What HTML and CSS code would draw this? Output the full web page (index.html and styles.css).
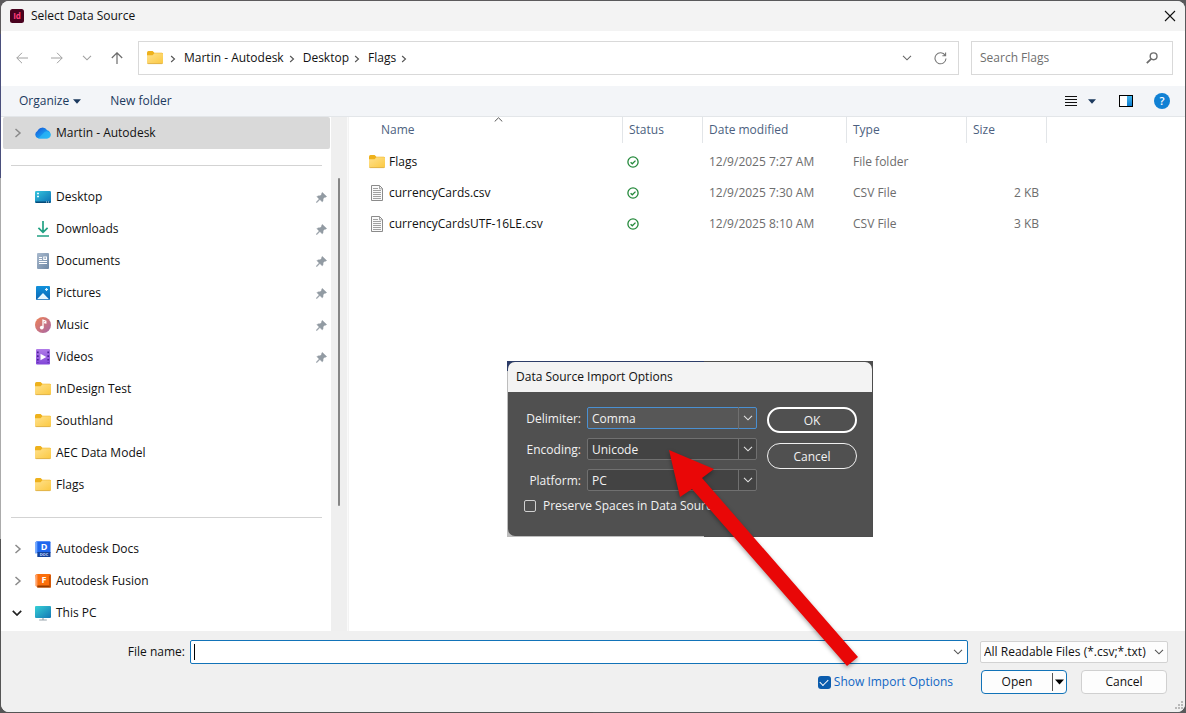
FILE: index.html
```html
<!DOCTYPE html>
<html lang="en">
<head>
<meta charset="utf-8">
<title>Select Data Source</title>
<link rel="stylesheet" href="styles.css">
</head>
<body>
<svg class="defs" width="0" height="0" aria-hidden="true">
  <defs>
    <linearGradient id="g-folder" x1="0" y1="0" x2="1" y2="1"><stop offset="0" stop-color="#ffe18e"/><stop offset="1" stop-color="#fbc942"/></linearGradient>
    <linearGradient id="g-desk" x1="0" y1="0" x2="1" y2="1"><stop offset="0" stop-color="#35c5dd"/><stop offset="1" stop-color="#0b6fb4"/></linearGradient>
    <linearGradient id="g-pc" x1="0" y1="0" x2="1" y2="1"><stop offset="0" stop-color="#36d0d6"/><stop offset="1" stop-color="#1477b5"/></linearGradient>
    <linearGradient id="g-doc" x1="0" y1="0" x2="1" y2="1"><stop offset="0" stop-color="#a9bace"/><stop offset="1" stop-color="#6e87a4"/></linearGradient>
    <linearGradient id="g-pic" x1="0" y1="0" x2="0" y2="1"><stop offset="0" stop-color="#1292dc"/><stop offset="1" stop-color="#0b66b4"/></linearGradient>
    <linearGradient id="g-music" x1="0" y1="0" x2="1" y2="1"><stop offset="0" stop-color="#ef8354"/><stop offset="1" stop-color="#a766a8"/></linearGradient>
    <linearGradient id="g-video" x1="0" y1="0" x2="0" y2="1"><stop offset="0" stop-color="#b07be8"/><stop offset="1" stop-color="#8246d8"/></linearGradient>
    <linearGradient id="g-cloud" x1="0" y1="0" x2="1" y2="1"><stop offset="0" stop-color="#1b4fd0"/><stop offset=".45" stop-color="#1787ea"/><stop offset="1" stop-color="#28c3f8"/></linearGradient>
    <linearGradient id="g-pane" x1="0" y1="0" x2="0" y2="1"><stop offset="0" stop-color="#42b5ec"/><stop offset="1" stop-color="#0b7cd0"/></linearGradient>
    <symbol id="folder" viewBox="0 0 16 16"><path d="M0 2.7Q0 1 1.5 1H5.6L7.4 2.700H14.6Q16 2.700 16 4V7H0Z" fill="#eeb11c"/><path d="M0 5.2H5.6L7.4 3.300H15Q16 3.300 16 4.300V12.500Q16 13.500 15 13.500H1Q0 13.500 0 12.500Z" fill="url(#g-folder)"/><path d="M.3 13Q.6 13.600 1.2 13.600H14.8Q15.5 13.600 15.7 13" fill="none" stroke="#d9a326" stroke-width=".8"/></symbol>
    <symbol id="pin" viewBox="0 0 11 11"><path d="M6.3.4 10.6 4.5 9.7 5.2 8.9 5 7.1 6.8 7 9.1 6.2 9.8 3.9 7.6.7 10.7.2 10.2 3.2 7 1 4.7 1.8 3.9 4.2 3.8 5.9 2.1 5.6 1.2Z" fill="#929ba3" stroke="#929ba3" stroke-width=".5"/></symbol>
    <symbol id="file" viewBox="0 0 16 16"><path d="M2.5.5H10.5L13.5 3.5V15.5H2.5Z" fill="#fafafa" stroke="#8b8b8b"/><path d="M10.5.6V3.8H13.4" fill="none" stroke="#8b8b8b" stroke-width=".8"/><path d="M4 3.5H9M4 5.5H12M4 7.5H12M4 9.5H12M4 11.5H12M4 13.5H12" stroke="#a0a0a0"/></symbol>
    <symbol id="ok" viewBox="0 0 12 12"><circle cx="6" cy="6" r="5.1" fill="none" stroke="#24893b" stroke-width="1.3"/><path d="M3.6 6.2 5.3 7.8 8.5 4.6" fill="none" stroke="#24893b" stroke-width="1.3"/></symbol>
    <symbol id="chev-r" viewBox="0 0 8 10"><path d="M1.5 1 6 5 1.5 9" fill="none" stroke="currentColor" stroke-width="1.5"/></symbol>
    <symbol id="chev-d" viewBox="0 0 10 6"><path d="M1 .8 5 4.8 9 .8" fill="none" stroke="currentColor" stroke-width="1.1"/></symbol>
    <symbol id="tri" viewBox="0 0 8 5"><path d="M0 .3H8L4 4.7Z" fill="currentColor"/></symbol>
  </defs>
</svg>

<div class="window">
  <header class="titlebar">
    <svg class="app-icon" viewBox="0 0 14 14"><rect width="14" height="14" rx="2.5" fill="#49021f"/><text x="7" y="10" class="app-letters">Id</text></svg>
    <h1 class="title">Select Data Source</h1>
    <button class="plain close" aria-label="Close"><svg width="12" height="12" viewBox="0 0 12 12"><path d="M1 1 11 11M11 1 1 11" stroke="#111" stroke-width="1.1"/></svg></button>
  </header>

  <nav class="navbar">
    <div class="arrows">
      <button class="plain muted" aria-label="Back"><svg width="12" height="12" viewBox="0 0 12 12"><path d="M12 6H.8M6 .8.8 6 6 11.2" fill="none" stroke="currentColor"/></svg></button>
      <button class="plain muted forward" aria-label="Forward"><svg width="12" height="12" viewBox="0 0 12 12"><path d="M0 6H11.2M6 .8 11.2 6 6 11.2" fill="none" stroke="currentColor"/></svg></button>
      <button class="plain muted" aria-label="Recent locations"><svg width="10" height="6"><use href="#chev-d"/></svg></button>
      <button class="plain" aria-label="Up"><svg width="12" height="12" viewBox="0 0 12 12"><path d="M6 12V.8M.8 6 6 .8 11.2 6" fill="none" stroke="currentColor" stroke-width="1.2"/></svg></button>
    </div>
    <div class="address">
      <svg class="ico" width="16" height="16"><use href="#folder"/></svg>
      <svg class="crumb-sep" width="6" height="8"><use href="#chev-r"/></svg>
      <a href="#">Martin - Autodesk</a>
      <svg class="crumb-sep" width="6" height="8"><use href="#chev-r"/></svg>
      <a href="#">Desktop</a>
      <svg class="crumb-sep" width="6" height="8"><use href="#chev-r"/></svg>
      <a href="#">Flags</a>
      <svg class="crumb-sep" width="6" height="8"><use href="#chev-r"/></svg>
      <button class="plain history" aria-label="Previous locations"><svg width="10" height="6"><use href="#chev-d"/></svg></button>
      <button class="plain refresh" aria-label="Refresh"><svg width="13" height="13" viewBox="0 0 13 13"><path d="M11.2 3.4A5.5 5.5 0 1 0 12 6.5M11.6.6V3.8H8.4" fill="none" stroke="currentColor" stroke-width="1.1"/></svg></button>
    </div>
    <label class="search">
      <input type="search" placeholder="Search Flags" aria-label="Search Flags">
      <svg width="12" height="12" viewBox="0 0 12 12"><circle cx="7.6" cy="4.3" r="3.4" fill="none" stroke="#6d6d6d" stroke-width="1.4"/><path d="M5.2 6.8.8 11.2" stroke="#6d6d6d" stroke-width="1.8"/></svg>
    </label>
  </nav>

  <div class="toolbar">
    <button class="plain organize">Organize <svg width="8" height="5"><use href="#tri"/></svg></button>
    <button class="plain">New folder</button>
    <div class="tools">
      <button class="plain view" aria-label="Change view"><svg width="12" height="11" viewBox="0 0 12 11"><path d="M0 .5H12M0 3.5H12M0 6.5H12M0 9.5H12" stroke="#111"/></svg><svg width="8" height="5"><use href="#tri"/></svg></button>
      <button class="plain" aria-label="Preview pane"><svg width="14" height="12" viewBox="0 0 14 12"><rect x=".5" y=".5" width="13" height="11" fill="#fff" stroke="#000"/><rect x="8" y="1" width="5" height="10" fill="url(#g-pane)"/></svg></button>
      <button class="plain help" aria-label="Help">?</button>
    </div>
  </div>

  <main class="browser">
    <div class="side">
      <ul class="tree">
        <li class="row selected"><svg class="twist" width="8" height="10"><use href="#chev-r"/></svg><svg class="ico" viewBox="0 0 16 16"><path d="M4 13.5A4 4 0 0 1 2.4 6 5.5 5.5 0 0 1 12.2 5.3 4.2 4.2 0 0 1 12 13.5Z" fill="url(#g-cloud)"/><path d="M3.2 13.4 9.8 6.8A4.5 4.5 0 0 1 16 9.4 4 4 0 0 1 12 13.5H4Z" fill="#29b7f6" opacity=".75"/></svg><span>Martin - Autodesk</span></li>
        <li class="row divider"></li>
        <li class="row"><svg class="ico" viewBox="0 0 16 16"><rect y="2" width="16" height="12" rx="1.2" fill="url(#g-desk)"/><path d="M.3 12.6H15.7V13Q15.5 14 14.5 14H1.5Q.5 14 .3 13Z" fill="#064a78"/><path d="M2 4.5H4M2 7.5H4" stroke="#e6fbff" stroke-width="1.5"/><path d="M11 13H12M13 13H14" stroke="#fff" stroke-width=".8"/></svg><span>Desktop</span><svg class="pin"><use href="#pin"/></svg></li>
        <li class="row"><svg class="ico" viewBox="0 0 16 16"><path d="M8 0V11M3.4 6.8 8 11.4 12.6 6.8" fill="none" stroke="#22a183" stroke-width="1.7"/><path d="M2 15H14" stroke="#22a183" stroke-width="1.6"/></svg><span>Downloads</span><svg class="pin"><use href="#pin"/></svg></li>
        <li class="row"><svg class="ico" viewBox="0 0 16 16"><rect x="2" width="12" height="16" rx="1" fill="url(#g-doc)"/><path d="M4 4.5H7M4 6.5H7M4 8.5H12M4 10.5H12" stroke="#fff"/><path d="M8.2 3.5H12V7H8.2Z" fill="#fff"/><path d="M9.3 4.5H11V5.8H9.3Z" fill="#7f95af"/></svg><span>Documents</span><svg class="pin"><use href="#pin"/></svg></li>
        <li class="row"><svg class="ico" viewBox="0 0 16 16"><rect x="1" y="1" width="14" height="14" rx="1" fill="url(#g-pic)"/><path d="M2 14.2 8 8 14 14.2Z" fill="#e8f7ff"/><path d="M11.5 3V6M10 4.5H13" stroke="#dff3ff" stroke-width="1.2"/></svg><span>Pictures</span><svg class="pin"><use href="#pin"/></svg></li>
        <li class="row"><svg class="ico" viewBox="0 0 16 16"><circle cx="8" cy="8" r="8" fill="url(#g-music)"/><circle cx="6.8" cy="10.6" r="1.9" fill="#fff"/><path d="M8 10.6V3.2L10.8 4.2V6L9 5.6" fill="none" stroke="#fff" stroke-width="1.3"/></svg><span>Music</span><svg class="pin"><use href="#pin"/></svg></li>
        <li class="row"><svg class="ico" viewBox="0 0 16 16"><rect x="1" width="14" height="15.5" rx="1" fill="url(#g-video)"/><path d="M2.8 2.5V14M13.2 2.5V14" stroke="#4a1f96" stroke-width="1.7" stroke-dasharray="1.7 2"/><path d="M5.5 4.7 11.3 8 5.5 11.3Z" fill="#fff"/></svg><span>Videos</span><svg class="pin"><use href="#pin"/></svg></li>
        <li class="row"><svg class="ico"><use href="#folder"/></svg><span>InDesign Test</span></li>
        <li class="row"><svg class="ico"><use href="#folder"/></svg><span>Southland</span></li>
        <li class="row"><svg class="ico"><use href="#folder"/></svg><span>AEC Data Model</span></li>
        <li class="row"><svg class="ico"><use href="#folder"/></svg><span>Flags</span></li>
        <li class="row divider"></li>
        <li class="row"><svg class="twist" width="8" height="10"><use href="#chev-r"/></svg><svg class="ico" viewBox="0 0 16 16"><path d="M.5 1.5Q.5.5 1.8.2H14.5Q15.5.2 15.5 1.2V12H.5Z" fill="#1f67ee"/><path d="M.5 1.2 2.3.4V12L.5 13Z" fill="#6da5ff"/><rect x="2.3" y="11" width="13.2" height="5" fill="#12429a"/><text x="9" y="9" class="logo-letter">D</text><text x="9" y="15" class="logo-tiny">DOC</text></svg><span>Autodesk Docs</span></li>
        <li class="row"><svg class="twist" width="8" height="10"><use href="#chev-r"/></svg><svg class="ico" viewBox="0 0 16 16"><path d="M.3 2.5Q.3 1.2 2.3 1H14.5Q15.8 1 15.8 2.2V14.6H2.3Z" fill="#fb6f0c"/><path d="M.3 2.2 2.4 1V14.6L.3 12.8Z" fill="#ffa066"/><path d="M2.3 12.4H14L15.8 14.6H2.3Z" fill="#963c00"/><path d="M14 3 15.8 1.6V14.6L14 12.4Z" fill="#c94f00"/><text x="9" y="10" class="logo-letter">F</text></svg><span>Autodesk Fusion</span></li>
        <li class="row"><svg class="twist open" width="10" height="6" viewBox="0 0 10 6"><path d="M.8.8 5 5 9.2.8" fill="none" stroke="#222" stroke-width="1.7"/></svg><svg class="ico" viewBox="0 0 16 16"><path d="M8 12V15M4.2 15H11.8" stroke="#9aa5ad" stroke-width="1.2"/><rect y="1" width="16" height="12" rx="1" fill="url(#g-pc)"/></svg><span>This PC</span></li>
      </ul>
      <div class="scrollbar"><div class="thumb"></div></div>
    </div>

    <section class="files">
      <table>
        <colgroup><col class="c-name"><col class="c-status"><col class="c-date"><col class="c-type"><col class="c-size"></colgroup>
        <thead><tr><th class="name">Name<svg class="sort" width="9" height="5" viewBox="0 0 9 5"><path d="M.7 4.5 4.5.8 8.3 4.5" fill="none" stroke="#555"/></svg></th><th>Status</th><th>Date modified</th><th>Type</th><th>Size</th></tr></thead>
        <tbody>
          <tr><td class="name"><div class="file"><svg class="ico"><use href="#folder"/></svg>Flags</div></td><td><svg class="ok"><use href="#ok"/></svg></td><td>12/9/2025 7:27 AM</td><td>File folder</td><td class="num"></td></tr>
          <tr><td class="name"><div class="file"><svg class="ico"><use href="#file"/></svg>currencyCards.csv</div></td><td><svg class="ok"><use href="#ok"/></svg></td><td>12/9/2025 7:30 AM</td><td>CSV File</td><td class="num">2 KB</td></tr>
          <tr><td class="name"><div class="file"><svg class="ico"><use href="#file"/></svg>currencyCardsUTF-16LE.csv</div></td><td><svg class="ok"><use href="#ok"/></svg></td><td>12/9/2025 8:10 AM</td><td>CSV File</td><td class="num">3 KB</td></tr>
        </tbody>
      </table>
    </section>
  </main>

  <footer class="footer">
    <div class="line">
      <label class="fn-label" for="filename">File name:</label>
      <div class="filename"><span class="caret"></span><input id="filename" type="text"><svg width="10" height="6"><use href="#chev-d"/></svg></div>
      <div class="pick filter"><select aria-label="File type"><option>All Readable Files (*.csv;*.txt)</option></select><svg width="10" height="6"><use href="#chev-d"/></svg></div>
    </div>
    <div class="line actions">
      <label class="show"><input type="checkbox" checked><span>Show Import Options</span></label>
      <div class="split"><button class="open">Open</button><button class="more" aria-label="More open options"><svg width="9" height="6" viewBox="0 0 9 6"><path d="M0 .5H9L4.5 5.5Z" fill="#000"/></svg></button></div>
      <button class="cancel">Cancel</button>
    </div>
    <svg class="grip" width="9" height="9" viewBox="0 0 9 9"><path d="M6 0H8V2H6ZM6 3H8V5H6ZM3 3H5V5H3ZM6 6H8V8H6ZM3 6H5V8H3ZM0 6H2V8H0Z" fill="#b9b9b9"/></svg>
  </footer>
</div>

<section class="backdrop" aria-label="Data Source Import Options">
  <div class="options">
    <h2 class="options-title">Data Source Import Options</h2>
    <div class="options-body">
      <div class="fields">
        <label for="delim">Delimiter:</label>
        <div class="pick dark active"><select id="delim"><option>Comma</option></select><svg width="10" height="6"><use href="#chev-d"/></svg></div>
        <label for="enc">Encoding:</label>
        <div class="pick dark"><select id="enc"><option>Unicode</option></select><svg width="10" height="6"><use href="#chev-d"/></svg></div>
        <label for="plat">Platform:</label>
        <div class="pick dark"><select id="plat"><option>PC</option></select><svg width="10" height="6"><use href="#chev-d"/></svg></div>
        <label class="preserve"><input type="checkbox"><span>Preserve Spaces in Data Source</span></label>
      </div>
      <div class="buttons"><button class="pill primary">OK</button><button class="pill">Cancel</button></div>
    </div>
  </div>
</section>

<svg class="pointer" width="200" height="226" viewBox="0 0 200 226" aria-hidden="true"><path d="M4 4 49 23 37 32 193 211 182 220 27 43 15 51Z" fill="#e90707"/></svg>
</body>
</html>
```

FILE: styles.css
```css
* { box-sizing: border-box; }

body {
  margin: 0;
  min-height: 100vh;
  display: flex;
  position: relative;
  padding: 1px;
  background: linear-gradient(90deg, transparent 0 50%, #59595b 50%), linear-gradient(#5c5a5c 0 34px, #4a4f7c 34px 178px, #ababab 178px 539px, #555 539px);
  font: 12px/16px "Open Sans", "Noto Sans", sans-serif;
  color: #111;
}

.defs { position: absolute; }
svg { display: block; flex: none; }
button, input, select { font: inherit; color: inherit; margin: 0; }
h1, h2 { margin: 0; font-size: 12px; font-weight: 400; }
a { color: inherit; text-decoration: none; }
.plain { border: 0; background: none; padding: 0; display: flex; align-items: center; }
.ico { width: 16px; height: 16px; }

.window {
  flex: 1;
  display: flex;
  flex-direction: column;
  background: #fff;
  border-radius: 8px;
  overflow: hidden;
}

/* Title bar */
.titlebar { display: flex; align-items: center; height: 30px; padding: 0 9px; background: #f3f3f3; }
.app-icon { width: 14px; height: 14px; margin-right: 7px; }
.app-letters { font: 700 8px "Open Sans", sans-serif; fill: #ff3d7c; text-anchor: middle; }
.close { margin-left: auto; }

/* Navigation */
.navbar { display: flex; align-items: center; height: 55px; padding: 0 12px 1px 15px; }
.arrows { display: flex; width: 122px; gap: 19px; color: #6b6b6b; }
.muted { color: #a0a0a0; }
.forward { margin-left: 4px; }
.address { flex: 1; display: flex; align-items: center; height: 34px; padding: 0 11px 0 8px; border: 1px solid #d9d9d9; }
.address a { margin-right: 5px; }
.crumb-sep { margin: 2px 8px 0 0; color: #555; }
.address .ico { margin-right: 7px; }
.history { margin-left: auto; color: #666; }
.refresh { margin-left: 22px; color: #777; }
.search { display: flex; align-items: center; width: 202px; height: 34px; margin-left: 12px; padding: 0 14px 0 8px; border: 1px solid #d9d9d9; }
.search input { flex: 1; min-width: 0; border: 0; padding: 0; outline: 0; background: none; }
.search input::placeholder { color: #6f6f6f; opacity: 1; }

/* Command bar */
.toolbar { display: flex; align-items: center; height: 31px; padding: 0 15px 0 18px; background: #f3f5f8; border-bottom: 1px solid #e3e6e9; color: #1c3a5e; }
.organize { gap: 4px; margin-right: 29px; }
.tools { margin-left: auto; display: flex; align-items: center; gap: 23px; }
.view { gap: 11px; }
.help { width: 16px; height: 16px; margin-left: -2px; border-radius: 8px; justify-content: center; background: #1181d4; color: #fff; font-size: 11px; font-weight: 600; }

/* Folder tree and file list */
.browser { flex: 1; display: flex; }
.side { width: 347px; display: flex; border-right: 1px solid #fafafa; }
.tree { flex: 1; list-style: none; margin: 0; padding: 0 1px 0 2px; }
.row { display: grid; grid-template-columns: 32px 16px 1fr 11px; align-items: center; height: 32px; padding-right: 3px; }
.row .ico { grid-column: 2; }
.row span { grid-column: 3; padding-left: 5px; }
.selected { background: #d9d9d9; border-radius: 2px; }
.twist { grid-column: 1; grid-row: 1; margin-left: 11px; color: #8a8a8a; }
.twist.open { margin-left: 9px; }
.pin { width: 11px; height: 11px; }
.divider::before { content: ""; grid-column: 1 / -1; height: 1px; margin: 0 5px 0 8px; background: #d3d3d3; }
.logo-letter { font: 700 9px "Open Sans", sans-serif; fill: #fff; text-anchor: middle; }
.logo-tiny { font: 700 4px "Open Sans", sans-serif; fill: #c9dcff; text-anchor: middle; }
.scrollbar { width: 16px; padding: 61px 7px 125px; background: #efefef; display: flex; }
.thumb { flex: 1; background: #868686; border-radius: 1px; }

.files { flex: 1; border-left: 1px solid #f3f3f3; }
table { table-layout: fixed; width: 698px; border-collapse: separate; border-spacing: 0; }
.c-name { width: 274px; }
.c-status, .c-size { width: 80px; }
.c-date { width: 144px; }
.c-type { width: 120px; }
th, td { padding: 0 8px 0 6px; text-align: left; font-weight: 400; white-space: nowrap; }
th { height: 26px; color: #4c5f80; border-right: 1px solid #e2e5e8; position: relative; }
th.name { padding-left: 32px; }
.sort { position: absolute; top: 0; right: 119px; }
tbody::before { content: ""; display: block; height: 3px; }
td { height: 31px; color: #6d6d6d; }
td.name { padding-left: 20px; color: #111; }
.file { display: flex; align-items: center; gap: 4px; }
.num { text-align: right; }
.ok { width: 12px; height: 12px; margin-left: -2px; }

/* Footer */
.footer { position: relative; background: #f0f0f0; padding: 9px 17px 18px 0; }
.line { display: flex; align-items: center; height: 24px; }
.fn-label { width: 189px; padding-right: 5px; text-align: right; }
.filename { flex: 1; height: 24px; display: flex; align-items: center; padding: 0 4px 0 3px; background: #fff; border: 1px solid #1273b8; border-radius: 2px; color: #555; }
.filename input { flex: 1; min-width: 0; border: 0; outline: 0; padding: 0; background: none; }
.caret { width: 1px; height: 16px; background: #000; }
.pick { display: grid; grid-template-columns: 1fr auto; align-items: center; }
.pick select { grid-area: 1 / 1 / 2 / 3; appearance: none; width: 100%; height: 22px; padding: 0 4px; border: 1px solid #d2d2d2; border-radius: 2px; background: #fdfdfd; outline: 0; }
.pick svg { grid-area: 1 / 2; margin-right: 4px; pointer-events: none; color: #555; }
.filter { width: 188px; margin-left: 12px; }
.filter select { padding-left: 3px; }
.actions { margin-top: 6px; padding-right: 1px; justify-content: flex-end; }
.show { display: flex; align-items: center; gap: 3px; margin-right: 28px; color: #1066c4; }
.show input { appearance: none; width: 13px; height: 13px; border-radius: 3px; background: #0b5cad; display: grid; place-items: center; }
.show input:checked::after { content: ""; width: 7px; height: 4px; margin-bottom: 2px; border: solid #fff; border-width: 0 0 1px 1px; transform: rotate(-45deg); }
.split { display: flex; width: 86px; height: 24px; border: 1px solid #1273b8; border-radius: 4px; background: #fdfdfd; }
.split button { border: 0; background: none; padding: 0; }
.split .open { flex: 1; }
.split .more { width: 14px; display: flex; align-items: center; justify-content: center; border-left: 1px solid #555; margin: 2px 0; }
.cancel { width: 86px; height: 24px; margin-left: 14px; border: 1px solid #d0d0d0; border-radius: 4px; background: #fdfdfd; padding: 0; }
.grip { position: absolute; right: 1px; bottom: 2px; }

/* Import options dialog, floating over the browser */
.backdrop { position: absolute; left: 507px; top: 361px; width: 366px; padding: 1px; background: linear-gradient(90deg, transparent 0 197px, #4d4d4d 197px), linear-gradient(#2c3c68 0 10px, #bdbdbd 10px); }
.options { background: #505050; border-radius: 7px 7px 0 7px; overflow: hidden; color: #f2f2f2; }
.options-title { padding: 7px 8px; background: #f3f3f3; color: #111; }
.options-body { display: flex; justify-content: space-between; padding: 15px 15px 22px 16px; }
.fields { display: grid; grid-template-columns: 57px 170px; gap: 9px 6px; align-content: start; align-items: center; }
.fields > label { padding-top: 2px; text-align: right; }
.dark select { padding-top: 2px; background: #434343; border-color: #707070; }
.dark svg { height: 22px; width: 19px; padding: 8px 4px; margin: 0; border-left: 1px solid #707070; color: #e2e2e2; }
.dark.active select { background: #575757; border-color: #4a90d2; }
.fields .preserve { grid-column: 1 / -1; display: flex; align-items: center; gap: 7px; text-align: left; white-space: nowrap; margin-top: -4px; }
.preserve input { appearance: none; width: 12px; height: 12px; border: 1px solid #d0d0d0; border-radius: 2px; }
.buttons { display: flex; flex-direction: column; gap: 10px; width: 90px; }
.pill { height: 26px; padding: 2px 0 0; border: 1px solid #f0f0f0; border-radius: 13px; background: transparent; }
.pill.primary { border-width: 2px; border-color: #fff; }

.pointer { position: absolute; left: 665px; top: 446px; filter: drop-shadow(0 2px 2px rgba(0, 0, 0, .35)); pointer-events: none; }
```
